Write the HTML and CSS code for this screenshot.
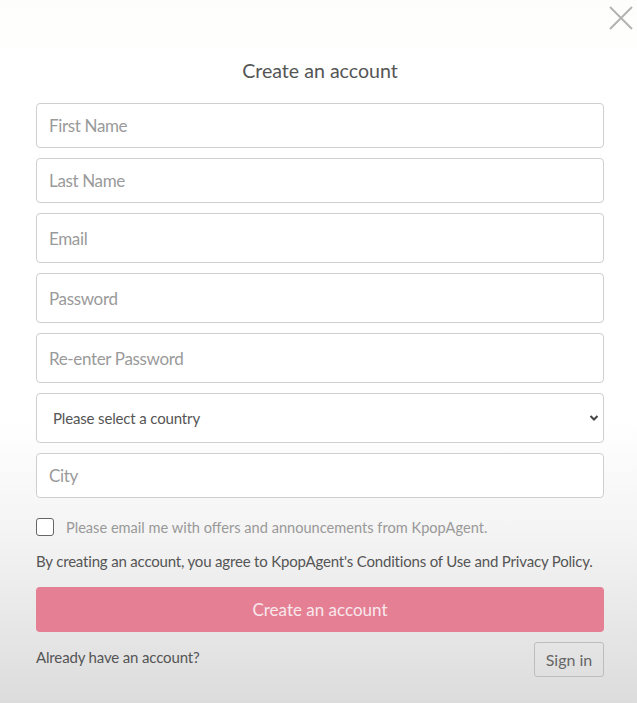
FILE: index.html
```html
<!DOCTYPE html>
<html lang="en">
<head>
<meta charset="utf-8">
<title>Create an account</title>
<link rel="stylesheet" href="styles.css">
</head>
<body>
<div class="page">
  <button class="close" aria-label="Close">
    <svg width="26" height="26" viewBox="0 0 26 26"><path d="M2 2 L24 24 M24 2 L2 24" stroke="#b3b3b3" stroke-width="2" fill="none"/></svg>
  </button>
  <form class="form">
    <h1 class="title">Create an account</h1>
    <div class="fields">
      <input class="field short" type="text" placeholder="First Name">
      <input class="field short" type="text" placeholder="Last Name">
      <input class="field" type="email" placeholder="Email">
      <input class="field" type="password" placeholder="Password">
      <input class="field" type="password" placeholder="Re-enter Password">
      <div class="select-wrap">
        <select class="field select">
          <option>Please select a country</option>
        </select>
        <svg class="chev" width="10" height="8" viewBox="0 0 10 8"><path d="M1.5 2 L5 5.5 L8.5 2" stroke="#444" stroke-width="2" fill="none"/></svg>
      </div>
      <input class="field short" type="text" placeholder="City">
    </div>
    <label class="check">
      <span class="box"></span>
      <span class="check-text">Please email me with offers and announcements from KpopAgent.</span>
    </label>
    <p class="terms">By creating an account, you agree to KpopAgent's Conditions of Use and Privacy Policy.</p>
    <button class="submit" type="button">Create an account</button>
    <div class="bottom">
      <span class="already">Already have an account?</span>
      <button class="signin" type="button">Sign in</button>
    </div>
  </form>
</div>
</body>
</html>
```
FILE: styles.css
```css
html, body {
  margin: 0;
  padding: 0;
  height: 100%;
}
body {
  font-family: Lato, "Open Sans", sans-serif;
  background: linear-gradient(to bottom, #fdfdfb 0px, #ffffff 60px, #ffffff 420px, #f3f3f3 540px, #dcdcdc 703px);
  color: #555;
}
.page {
  position: relative;
  height: 703px;
  overflow: hidden;
}
.close {
  position: absolute;
  top: 4px;
  right: 2px;
  width: 28px;
  height: 28px;
  padding: 0;
  border: 0;
  background: none;
  display: flex;
  align-items: center;
  justify-content: center;
}
.form {
  width: 568px;
  margin: 0 0 0 36px;
  padding-top: 58px;
  display: flex;
  flex-direction: column;
}
.title {
  margin: 0 0 19px;
  font-size: 19.6px;
  font-weight: 400;
  color: #555;
  text-align: center;
  line-height: 26px;
}
.fields {
  display: flex;
  flex-direction: column;
  gap: 10px;
}
.field {
  box-sizing: border-box;
  width: 100%;
  height: 50px;
  margin: 0;
  border: 1px solid #cfcfcf;
  border-radius: 4px;
  background: #fff;
  padding: 0 12px;
  font-family: inherit;
  font-size: 17px;
  letter-spacing: -0.35px;
  color: #555;
  outline: none;
}
.field.short {
  height: 45px;
}
.field::placeholder {
  color: #9a9a9a;
}
.select-wrap {
  position: relative;
}
.select {
  appearance: none;
  -webkit-appearance: none;
  padding-left: 16px;
  font-size: 15px;
  letter-spacing: -0.15px;
  color: #555;
}
.chev {
  position: absolute;
  right: 5px;
  top: 21px;
}
.check {
  display: flex;
  align-items: center;
  gap: 12px;
  margin-top: 20px;
  height: 18px;
}
.box {
  box-sizing: border-box;
  width: 18px;
  height: 18px;
  border: 1px solid #666;
  border-radius: 3px;
  background: #fff;
}
.check-text {
  font-size: 14.6px;
  color: #999;
}
.terms {
  margin: 16px 0 0;
  font-size: 15px;
  letter-spacing: -0.18px;
  line-height: 18px;
  color: #555;
  white-space: nowrap;
}
.submit {
  margin-top: 17px;
  height: 45px;
  border: 0;
  border-radius: 4px;
  background: #e57f94;
  color: #f8e8ec;
  font-family: inherit;
  font-size: 17px;
  padding: 0;
}
.bottom {
  display: flex;
  justify-content: space-between;
  align-items: flex-start;
  margin-top: 10px;
}
.already {
  font-size: 15px;
  letter-spacing: -0.15px;
  color: #555;
  margin-top: 6px;
}
.signin {
  box-sizing: border-box;
  width: 70px;
  height: 35px;
  border: 1px solid #bdbdbd;
  border-radius: 3px;
  background: transparent;
  font-family: inherit;
  font-size: 16px;
  color: #666;
  padding: 0;
}
```
